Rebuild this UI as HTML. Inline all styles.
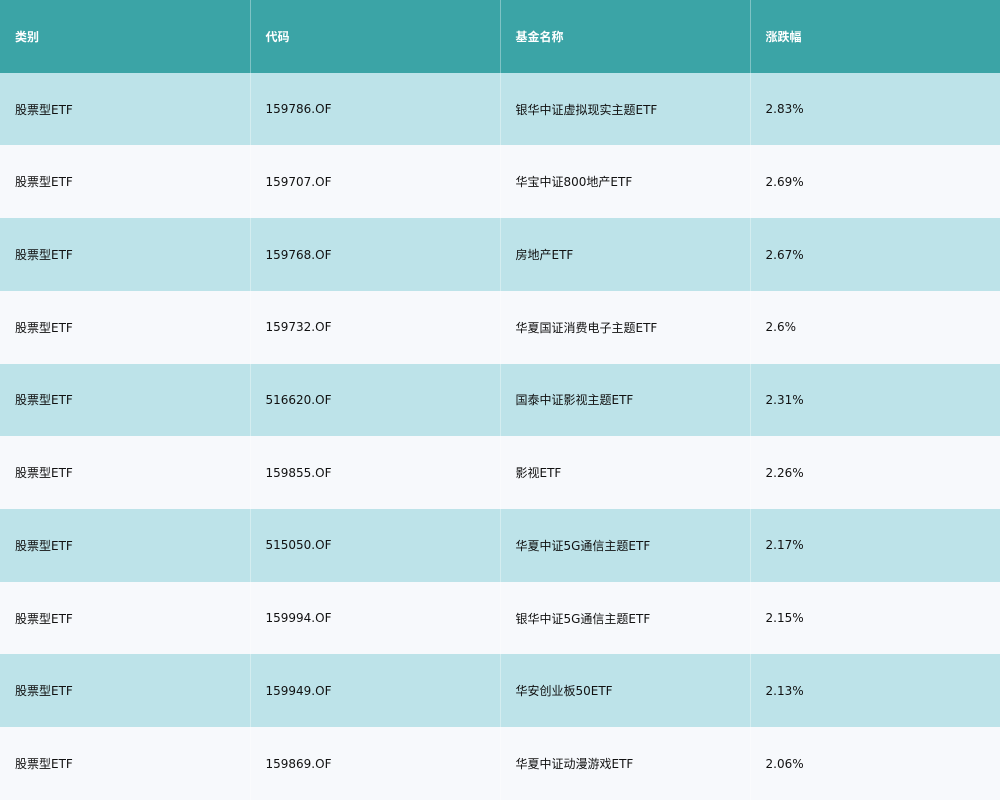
<!DOCTYPE html><html><head><meta charset="utf-8"><style>
body{margin:0;width:1000px;height:800px;overflow:hidden;font-family:"DejaVu Sans","Noto Sans CJK SC",sans-serif;font-size:12px;color:#111}
table{border-collapse:collapse;width:1000px;table-layout:fixed}
td,th{height:72.73px;padding:0 0 0 15px;text-align:left;border-left:1px solid rgba(255,255,255,.35);box-sizing:border-box}
td:first-child,th:first-child{border-left:none}
th{background:#3ba4a6;color:#fff;font-weight:bold}
tr:nth-child(even) td{background:#bde3e9}
tr:nth-child(odd) td{background:#f7f9fc}
</style></head><body><table>
<tr><th>类别</th><th>代码</th><th>基金名称</th><th>涨跌幅</th></tr>
<tr><td>股票型ETF</td><td>159786.OF</td><td>银华中证虚拟现实主题ETF</td><td>2.83%</td></tr>
<tr><td>股票型ETF</td><td>159707.OF</td><td>华宝中证800地产ETF</td><td>2.69%</td></tr>
<tr><td>股票型ETF</td><td>159768.OF</td><td>房地产ETF</td><td>2.67%</td></tr>
<tr><td>股票型ETF</td><td>159732.OF</td><td>华夏国证消费电子主题ETF</td><td>2.6%</td></tr>
<tr><td>股票型ETF</td><td>516620.OF</td><td>国泰中证影视主题ETF</td><td>2.31%</td></tr>
<tr><td>股票型ETF</td><td>159855.OF</td><td>影视ETF</td><td>2.26%</td></tr>
<tr><td>股票型ETF</td><td>515050.OF</td><td>华夏中证5G通信主题ETF</td><td>2.17%</td></tr>
<tr><td>股票型ETF</td><td>159994.OF</td><td>银华中证5G通信主题ETF</td><td>2.15%</td></tr>
<tr><td>股票型ETF</td><td>159949.OF</td><td>华安创业板50ETF</td><td>2.13%</td></tr>
<tr><td>股票型ETF</td><td>159869.OF</td><td>华夏中证动漫游戏ETF</td><td>2.06%</td></tr>
</table></body></html>
